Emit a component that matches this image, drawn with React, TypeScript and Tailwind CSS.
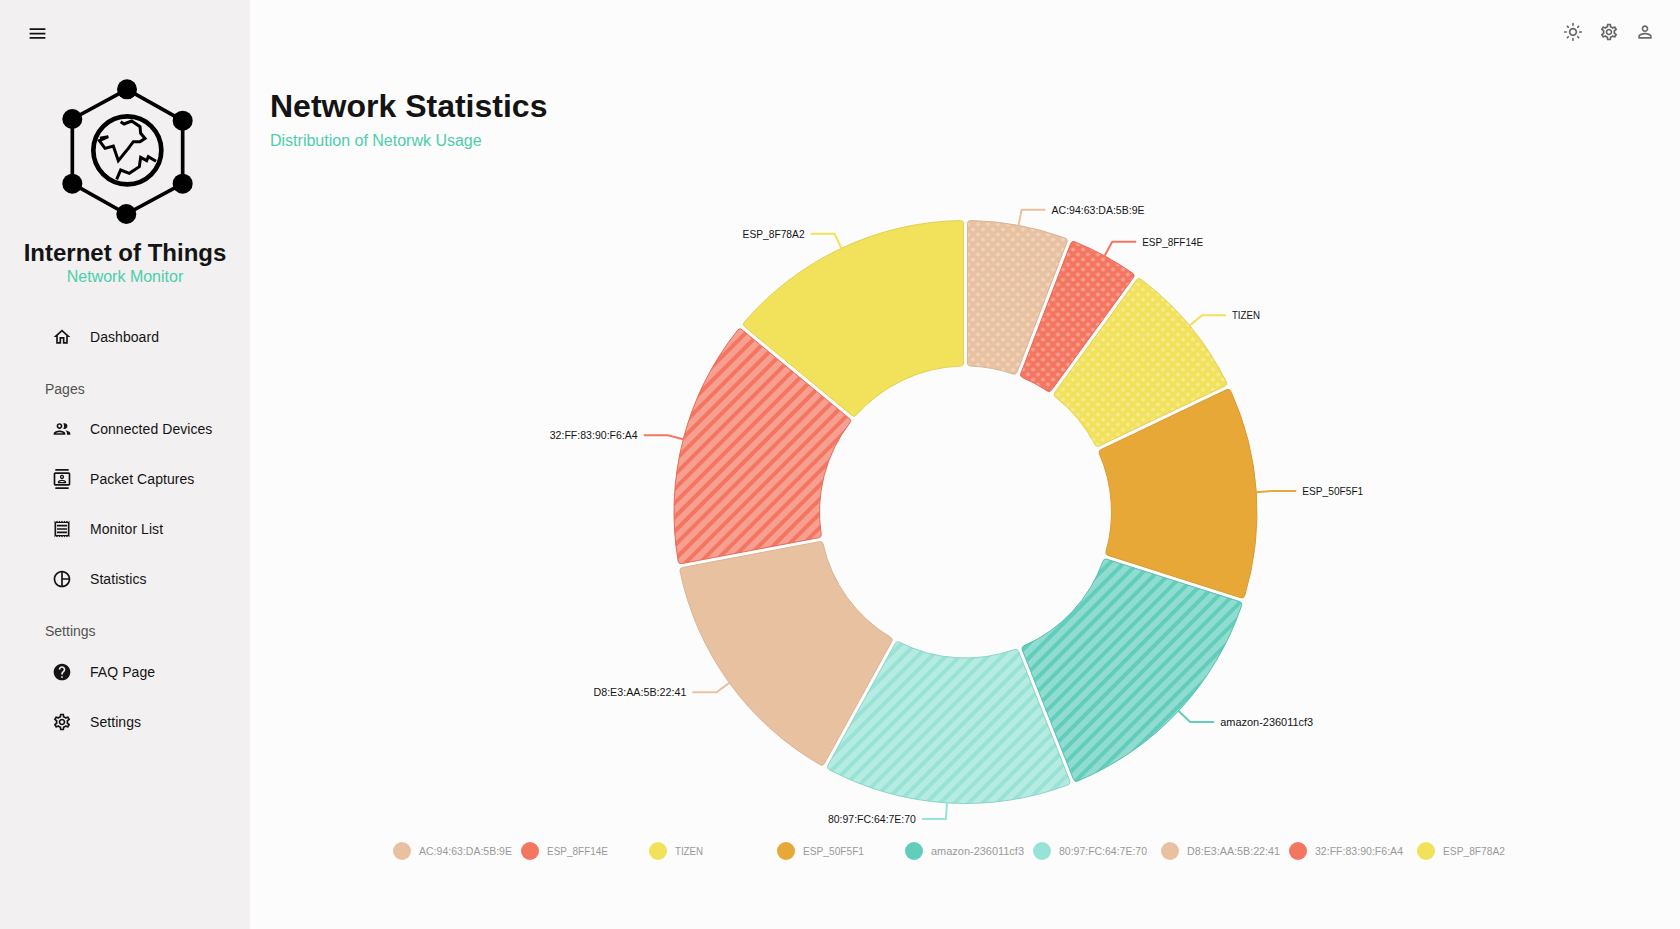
import type { ReactNode } from "react"

const paths = {
  menu: "M3 18h18v-2H3v2zm0-5h18v-2H3v2zm0-7v2h18V6H3z",
  home: "m12 5.69 5 4.5V18h-2v-6H9v6H7v-7.81l5-4.5M12 3 2 12h3v8h6v-6h2v6h6v-8h3L12 3z",
  people:
    "M9 13.75c-2.34 0-7 1.17-7 3.5V19h14v-1.75c0-2.33-4.66-3.5-7-3.5zM4.34 17c.84-.58 2.87-1.25 4.66-1.25s3.82.67 4.66 1.25H4.34zM9 12c1.93 0 3.5-1.57 3.5-3.5S10.93 5 9 5 5.5 6.57 5.5 8.5 7.07 12 9 12zm0-5c.83 0 1.5.67 1.5 1.5S9.83 10 9 10s-1.5-.67-1.5-1.5S8.17 7 9 7zm7.04 6.81c1.16.84 1.96 1.96 1.96 3.44V19h4v-1.75c0-2.02-3.5-3.17-5.96-3.44zM15 12c1.93 0 3.5-1.57 3.5-3.5S16.93 5 15 5c-.54 0-1.04.13-1.5.35.63.89 1 1.98 1 3.15s-.37 2.26-1 3.15c.46.22.96.35 1.5.35z",
  contacts:
    "M20 0H4v2h16V0zM4 24h16v-2H4v2zM20 4H4c-1.1 0-2 .9-2 2v12c0 1.1.9 2 2 2h16c1.1 0 2-.9 2-2V6c0-1.1-.9-2-2-2zm0 14H4V6h16v12zm-8-6c1.38 0 2.5-1.12 2.5-2.5S13.38 7 12 7 9.5 8.12 9.5 9.5 10.62 12 12 12zm0-3.5c.55 0 1 .45 1 1s-.45 1-1 1-1-.45-1-1 .45-1 1-1zm5 7.49C17 13.9 13.69 13 12 13s-5 .9-5 2.99V17h10v-1.01zm-8.19-.49c.61-.52 2.03-1 3.19-1 1.17 0 2.59.48 3.2 1H8.81z",
  receipt:
    "M19.5 3.5 18 2l-1.5 1.5L15 2l-1.5 1.5L12 2l-1.5 1.5L9 2 7.5 3.5 6 2 4.5 3.5 3 2v20l1.5-1.5L6 22l1.5-1.5L9 22l1.5-1.5L12 22l1.5-1.5L15 22l1.5-1.5L18 22l1.5-1.5L21 22V2l-1.5 1.5zM19 19.09H5V4.91h14v14.18zM6 15h12v2H6zm0-4h12v2H6zm0-4h12v2H6z",
  pie: "M12 2C6.5 2 2 6.5 2 12s4.5 10 10 10 10-4.5 10-10S17.5 2 12 2zm1 2.07c3.61.45 6.48 3.33 6.93 6.93H13V4.07zM4 12c0-4.06 3.07-7.44 7-7.93v15.87c-3.93-.5-7-3.88-7-7.94zm9 7.93V13h6.93c-.45 3.61-3.32 6.48-6.93 6.93z",
  help: "M12 2C6.48 2 2 6.48 2 12s4.48 10 10 10 10-4.48 10-10S17.52 2 12 2zm1 17h-2v-2h2v2zm2.07-7.75-.9.92C13.45 12.9 13 13.5 13 15h-2v-.5c0-1.1.45-2.1 1.17-2.83l1.24-1.26c.37-.36.59-.86.59-1.41 0-1.1-.9-2-2-2s-2 .9-2 2H8c0-2.21 1.79-4 4-4s4 1.79 4 4c0 .88-.36 1.68-.93 2.25z",
  settings:
    "M19.43 12.98c.04-.32.07-.64.07-.98 0-.34-.03-.66-.07-.98l2.11-1.65c.19-.15.24-.42.12-.64l-2-3.46c-.09-.16-.26-.25-.44-.25-.06 0-.12.01-.17.03l-2.49 1c-.52-.4-1.08-.73-1.69-.98l-.38-2.65C14.46 2.18 14.25 2 14 2h-4c-.25 0-.46.18-.49.42l-.38 2.65c-.61.25-1.17.59-1.69.98l-2.49-1c-.06-.02-.12-.03-.18-.03-.17 0-.34.09-.43.25l-2 3.46c-.13.22-.07.49.12.64l2.11 1.65c-.04.32-.07.65-.07.98 0 .33.03.66.07.98l-2.11 1.65c-.19.15-.24.42-.12.64l2 3.46c.09.16.26.25.44.25.06 0 .12-.01.17-.03l2.49-1c.52.4 1.08.73 1.69.98l.38 2.65c.03.24.24.42.49.42h4c.25 0 .46-.18.49-.42l.38-2.65c.61-.25 1.17-.59 1.69-.98l2.49 1c.06.02.12.03.18.03.17 0 .34-.09.43-.25l2-3.46c.12-.22.07-.49-.12-.64l-2.11-1.65zm-1.98-1.71c.04.31.05.52.05.73 0 .21-.02.43-.05.73l-.14 1.13.89.7 1.08.84-.7 1.21-1.27-.51-1.04-.42-.9.68c-.43.32-.84.56-1.25.73l-1.06.43-.16 1.13-.2 1.35h-1.4l-.19-1.35-.16-1.13-1.06-.43c-.43-.18-.83-.41-1.23-.71l-.91-.7-1.06.43-1.27.51-.7-1.21 1.08-.84.89-.7-.14-1.13c-.03-.31-.05-.54-.05-.74s.02-.43.05-.73l.14-1.13-.89-.7-1.08-.84.7-1.21 1.27.51 1.04.42.9-.68c.43-.32.84-.56 1.25-.73l1.06-.43.16-1.13.2-1.35h1.39l.19 1.35.16 1.13 1.06.43c.43.18.83.41 1.23.71l.91.7 1.06-.43 1.27-.51.7 1.21-1.07.85-.89.7.14 1.13zM12 8c-2.21 0-4 1.79-4 4s1.79 4 4 4 4-1.79 4-4-1.79-4-4-4zm0 6c-1.1 0-2-.9-2-2s.9-2 2-2 2 .9 2 2-.9 2-2 2z",
  sun: "M12 9c1.65 0 3 1.35 3 3s-1.35 3-3 3-3-1.35-3-3 1.35-3 3-3m0-2c-2.76 0-5 2.24-5 5s2.24 5 5 5 5-2.24 5-5-2.24-5-5-5zM2 13h2c.55 0 1-.45 1-1s-.45-1-1-1H2c-.55 0-1 .45-1 1s.45 1 1 1zm18 0h2c.55 0 1-.45 1-1s-.45-1-1-1h-2c-.55 0-1 .45-1 1s.45 1 1 1zM11 2v2c0 .55.45 1 1 1s1-.45 1-1V2c0-.55-.45-1-1-1s-1 .45-1 1zm0 18v2c0 .55.45 1 1 1s1-.45 1-1v-2c0-.55-.45-1-1-1s-1 .45-1 1zM5.99 4.58c-.39-.39-1.03-.39-1.41 0-.39.39-.39 1.03 0 1.41l1.06 1.06c.39.39 1.03.39 1.41 0s.39-1.03 0-1.41L5.99 4.58zm12.37 12.37c-.39-.39-1.03-.39-1.41 0-.39.39-.39 1.03 0 1.41l1.06 1.06c.39.39 1.03.39 1.41 0 .39-.39.39-1.03 0-1.41l-1.06-1.06zm1.06-10.96c.39-.39.39-1.03 0-1.41-.39-.39-1.03-.39-1.41 0l-1.06 1.06c-.39.39-.39 1.03 0 1.41s1.03.39 1.41 0l1.06-1.06zM7.05 18.36c.39-.39.39-1.03 0-1.41-.39-.39-1.03-.39-1.41 0l-1.06 1.06c-.39.39-.39 1.03 0 1.41s1.03.39 1.41 0l1.06-1.06z",
  person:
    "M12 5.9c1.16 0 2.1.94 2.1 2.1s-.94 2.1-2.1 2.1S9.9 9.16 9.9 8s.94-2.1 2.1-2.1m0 9c2.97 0 6.1 1.46 6.1 2.1v1.1H5.9V17c0-.64 3.13-2.1 6.1-2.1M12 4C9.79 4 8 5.79 8 8s1.79 4 4 4 4-1.79 4-4-1.79-4-4-4zm0 9c-2.67 0-8 1.34-8 4v3h16v-3c0-2.66-5.33-4-8-4z",
}

function Icon({ d, className }: { d: string; className: string }) {
  return (
    <svg viewBox="0 0 24 24" fill="currentColor" className={className}>
      <path d={d} />
    </svg>
  )
}

function Logo() {
  const nodes = [
    [231, 58],
    [398, 152],
    [398, 341],
    [229, 432],
    [67, 341],
    [67, 147],
  ]
  return (
    <svg viewBox="0 0 480 480" className="ml-[50px] mt-[26px] h-[160px] w-[160px]">
      <polygon points={nodes.map((n) => n.join(",")).join(" ")} fill="none" stroke="#000" strokeWidth="11" />
      {nodes.map(([x, y]) => (
        <circle key={`${x}-${y}`} cx={x} cy={y} r="30" fill="#000" />
      ))}
      <circle cx="232" cy="241" r="102" fill="none" stroke="#000" strokeWidth="14" />
      <path
        d="M212 155 L222 162 L245 153 L270 170 L272 190 L285 205 L270 215 L250 215 L235 235 L205 272 L190 228 L165 235 L148 212 L175 200 L150 205"
        fill="none"
        stroke="#000"
        strokeWidth="9"
      />
      <path
        d="M200 328 L212 300 L238 310 L268 290 L272 262 L290 272 L295 260 L318 274"
        fill="none"
        stroke="#000"
        strokeWidth="9"
      />
    </svg>
  )
}

function NavItem({ icon, children }: { icon: string; children: ReactNode }) {
  return (
    <div className="flex h-[50px] items-center pl-[52px] text-[14px] tracking-[0.06px] text-[#141414]">
      <Icon d={icon} className="mr-[18px] h-5 w-5 shrink-0" />
      <span>{children}</span>
    </div>
  )
}

function NavLabel({ className, children }: { className: string; children: ReactNode }) {
  return <div className={`h-5 pl-[45px] text-[14px] leading-5 text-[#525252] ${className}`}>{children}</div>
}

function Sidebar() {
  return (
    <aside className="flex h-full w-[250px] shrink-0 flex-col bg-[#f2f0f0] pt-[23px]">
      <Icon d={paths.menu} className="ml-[27px] h-[21px] w-[21px] text-[#141414]" />
      <Logo />
      <div className="mt-[9px] text-center text-[24px] font-bold leading-[27px] text-[#141414]">Internet of Things</div>
      <div className="mt-[2px] text-center text-[16px] leading-[18px] text-[#4cceac]">Network Monitor</div>
      <nav className="mt-[26px]">
        <NavItem icon={paths.home}>Dashboard</NavItem>
        <NavLabel className="mt-[17px] mb-[5px]">Pages</NavLabel>
        <NavItem icon={paths.people}>Connected Devices</NavItem>
        <NavItem icon={paths.contacts}>Packet Captures</NavItem>
        <NavItem icon={paths.receipt}>Monitor List</NavItem>
        <NavItem icon={paths.pie}>Statistics</NavItem>
        <NavLabel className="mt-[17px] mb-[6px]">Settings</NavLabel>
        <NavItem icon={paths.help}>FAQ Page</NavItem>
        <NavItem icon={paths.settings}>Settings</NavItem>
      </nav>
    </aside>
  )
}

type Slice = {
  id: string
  from: number
  to: number
  color: string
  border: string
  width: number
  fill?: "dots" | "lines"
}

const peach = { color: "#e8c1a0", border: "#d8b495" }
const coral = { color: "#f47560", border: "#e36d59" }
const yellow = { color: "#f1e15b", border: "#e0d155" }

const slices: Slice[] = [
  { id: "AC:94:63:DA:5B:9E", from: 0, to: 21, width: 93, ...peach, fill: "dots" },
  { id: "ESP_8FF14E", from: 21, to: 36, width: 61, ...coral, fill: "dots" },
  { id: "TIZEN", from: 36, to: 64.5, width: 28, ...yellow, fill: "dots" },
  { id: "ESP_50F5F1", from: 64.5, to: 107.7, width: 61, color: "#e8a838", border: "#d89c34" },
  { id: "amazon-236011cf3", from: 107.7, to: 158.4, width: 93, color: "#61cdbb", border: "#5abfae", fill: "lines" },
  { id: "80:97:FC:64:7E:70", from: 158.4, to: 208.9, width: 88, color: "#97e3d5", border: "#8dd3c6", fill: "lines" },
  { id: "D8:E3:AA:5B:22:41", from: 208.9, to: 259.3, width: 93, ...peach },
  { id: "32:FF:83:90:F6:A4", from: 259.3, to: 309.6, width: 88, ...coral, fill: "lines" },
  { id: "ESP_8F78A2", from: 309.6, to: 360, width: 62, ...yellow },
]

const OUTER = 291.5
const INNER = 146
const GAP = 2
const CORNER = 3

const rad = (deg: number) => (deg * Math.PI) / 180
const polar = (r: number, a: number) => [r * Math.sin(a), -r * Math.cos(a)]
const pt = (r: number, a: number) => polar(r, a).map((v) => v.toFixed(2)).join(" ")

// annular sector with parallel gaps and small rounded corners
function slicePath(from: number, to: number) {
  const a0 = rad(from)
  const a1 = rad(to)
  const side = (r: number) => Math.asin(GAP / r)
  const o0 = a0 + side(OUTER)
  const o1 = a1 - side(OUTER)
  const i0 = a0 + side(INNER)
  const i1 = a1 - side(INNER)
  const co = CORNER / OUTER
  const ci = CORNER / INNER
  const s0o = a0 + side(OUTER - CORNER)
  const s1o = a1 - side(OUTER - CORNER)
  const s0i = a0 + side(INNER + CORNER)
  const s1i = a1 - side(INNER + CORNER)
  const large = to - from > 180 ? 1 : 0
  return [
    `M${pt(OUTER - CORNER, s0o)}`,
    `Q${pt(OUTER, o0)} ${pt(OUTER, o0 + co)}`,
    `A${OUTER} ${OUTER} 0 ${large} 1 ${pt(OUTER, o1 - co)}`,
    `Q${pt(OUTER, o1)} ${pt(OUTER - CORNER, s1o)}`,
    `L${pt(INNER + CORNER, s1i)}`,
    `Q${pt(INNER, i1)} ${pt(INNER, i1 - ci)}`,
    `A${INNER} ${INNER} 0 ${large} 0 ${pt(INNER, i0 + ci)}`,
    `Q${pt(INNER, i0)} ${pt(INNER + CORNER, s0i)}`,
    "Z",
  ].join(" ")
}

function PieChart() {
  return (
    <svg width="1430" height="730" className="mt-[21px] block" fontFamily="'Liberation Sans', Arial, sans-serif">
      <defs>
        {slices
          .filter((s) => s.fill)
          .map((s) =>
            s.fill === "dots" ? (
              <pattern key={s.id} id={`p-${s.color.slice(1)}-dots`} width="10" height="10" patternUnits="userSpaceOnUse">
                <rect width="10" height="10" fill={s.color} />
                <circle cx="2.5" cy="2.5" r="2" fill="rgba(255,255,255,0.3)" />
                <circle cx="7.5" cy="7.5" r="2" fill="rgba(255,255,255,0.3)" />
              </pattern>
            ) : (
              <pattern
                key={s.id}
                id={`p-${s.color.slice(1)}-lines`}
                width="10"
                height="10"
                patternUnits="userSpaceOnUse"
                patternTransform="rotate(-45)"
              >
                <rect width="10" height="10" fill={s.color} />
                <rect width="10" height="6" fill="rgba(255,255,255,0.3)" />
              </pattern>
            ),
          )}
      </defs>
      <g transform="translate(715.5 341)">
        {slices.map((s) => (
          <path
            key={s.id}
            d={slicePath(s.from, s.to)}
            fill={s.fill ? `url(#p-${s.color.slice(1)}-${s.fill})` : s.color}
            stroke={s.border}
            strokeWidth="1"
          />
        ))}
        {slices.map((s) => {
          const mid = rad((s.from + s.to) / 2)
          const [x0, y0] = polar(OUTER, mid)
          const [x1, y1] = polar(OUTER + 16, mid)
          const right = x1 > 0
          const x2 = x1 + (right ? 24 : -24)
          return (
            <g key={s.id}>
              <polyline points={`${x0},${y0} ${x1},${y1} ${x2},${y1}`} fill="none" stroke={s.color} strokeWidth="2" />
              <text
                x={x2 + (right ? 6 : -6)}
                y={y1}
                textAnchor={right ? "start" : "end"}
                dominantBaseline="central"
                fontSize="11"
                fill="#141414"
                textLength={s.width}
                lengthAdjust="spacingAndGlyphs"
              >
                {s.id}
              </text>
            </g>
          )
        })}
      </g>
      <g transform="translate(143 680)">
        {slices.map((s, i) => (
          <g key={s.id} transform={`translate(${i * 128} 0)`}>
            <circle cx="9" cy="0" r="9" fill={s.color} />
            <text
              x="26"
              y="0"
              dominantBaseline="central"
              fontSize="11"
              fill="#999999"
              textLength={s.width}
              lengthAdjust="spacingAndGlyphs"
            >
              {s.id}
            </text>
          </g>
        ))}
      </g>
    </svg>
  )
}

export default function App() {
  return (
    <div className="flex h-screen w-full overflow-hidden bg-[#fcfcfc] font-['Liberation_Sans',Arial,sans-serif]">
      <Sidebar />
      <main className="flex min-w-0 flex-1 flex-col">
        <div className="flex justify-end pt-[14px] pr-[17px] text-[#666666]">
          <button className="p-2">
            <Icon d={paths.sun} className="h-5 w-5" />
          </button>
          <button className="p-2">
            <Icon d={paths.settings} className="h-5 w-5" />
          </button>
          <button className="p-2">
            <Icon d={paths.person} className="h-5 w-5" />
          </button>
        </div>
        <div className="pl-5 pt-[38px]">
          <h1 className="text-[32px] font-bold leading-[37px] text-[#141414]">Network Statistics</h1>
          <p className="mt-[7px] text-[16px] leading-[18px] text-[#4cceac]">Distribution of Netorwk Usage</p>
        </div>
        <PieChart />
      </main>
    </div>
  )
}
